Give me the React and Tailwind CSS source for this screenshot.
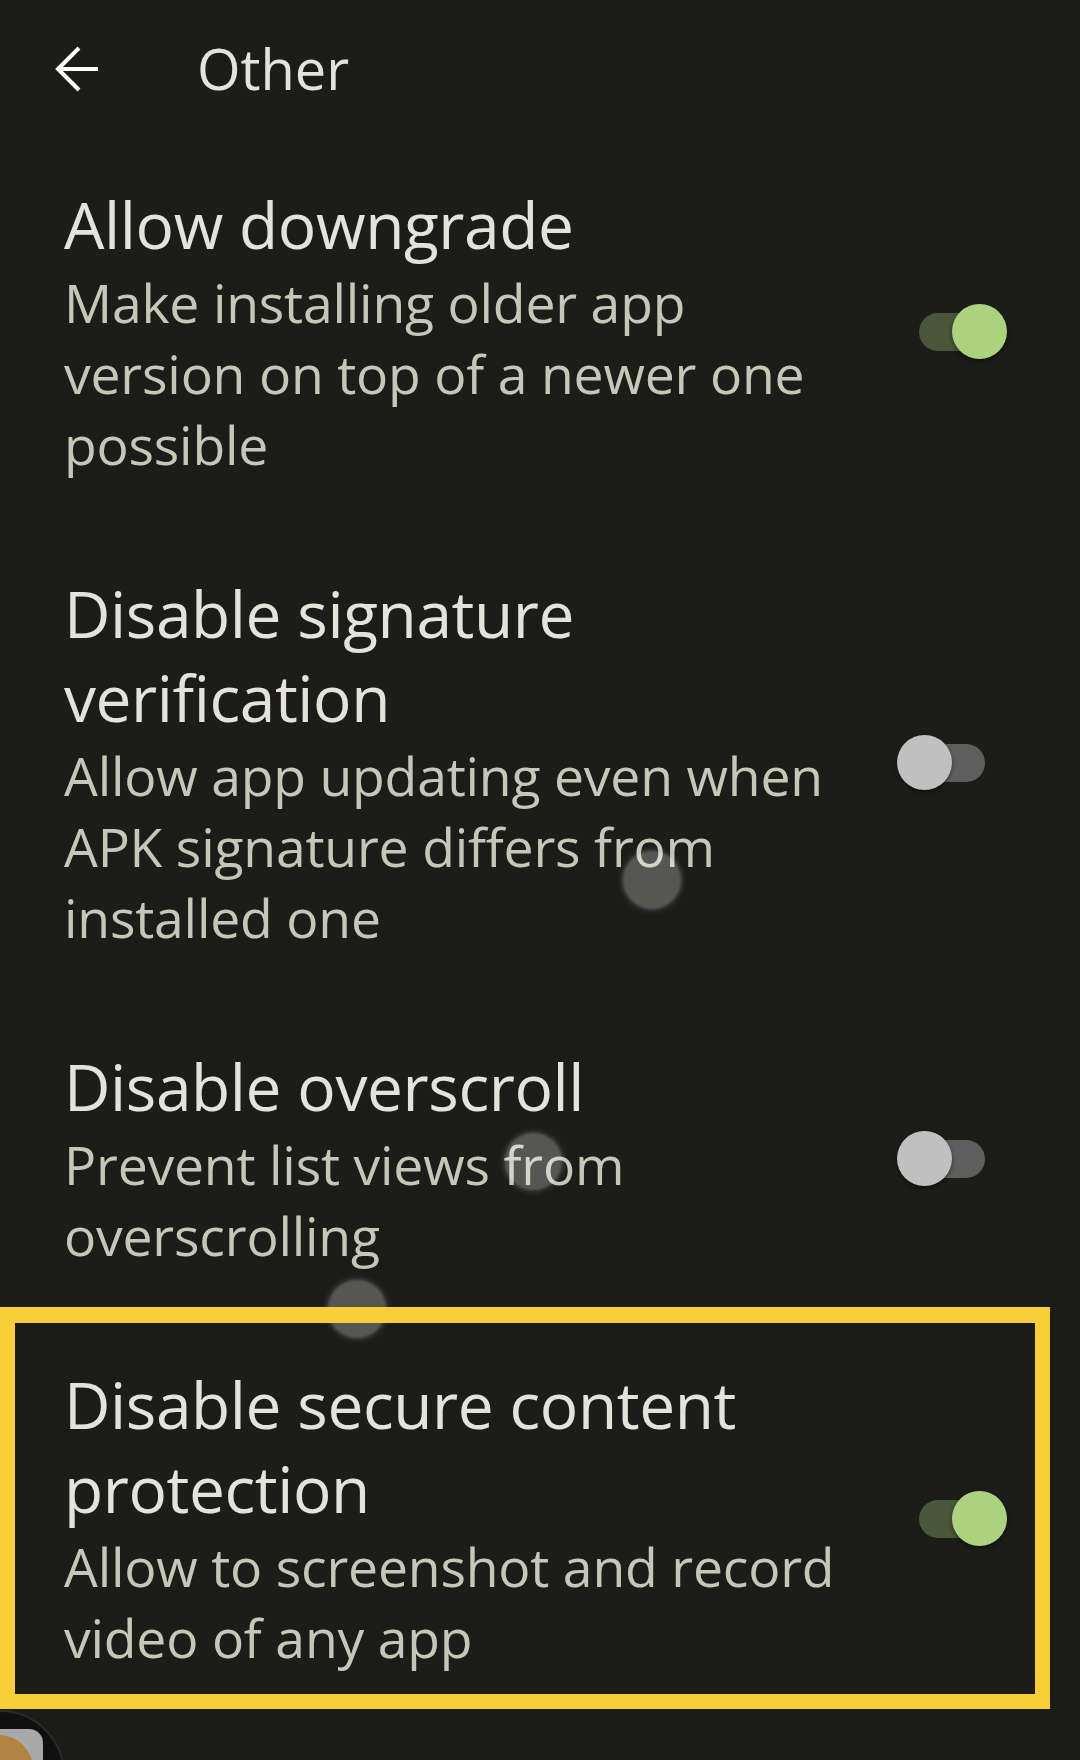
import React from "react";

const font = { fontFamily: '"Open Sans", "Noto Sans", sans-serif' };

function Toggle({ on }) {
  return (
    <div className="relative w-[110px] h-[55px] shrink-0">
      <div
        className={
          "absolute left-[22px] top-[9px] w-[66px] h-[38px] rounded-full " +
          (on ? "bg-[#4a573a]" : "bg-[#5e5e5e]")
        }
      />
      <div
        className={
          "absolute top-0 w-[55px] h-[55px] rounded-full shadow-[0_2px_4px_rgba(0,0,0,0.45)] " +
          (on ? "left-[55px] bg-[#acd280]" : "left-0 bg-[#c0c0c0]")
        }
      />
    </div>
  );
}

function Row({ title, sub, on }) {
  return (
    <div className="flex items-center py-[46px] pl-[64px] pr-[73px]">
      <div className="flex-1 flex flex-col">
        {title.map((t, i) => (
          <div key={i} className="text-[64px] tracking-[-0.4px] leading-[84px] text-[#e4e3db] whitespace-nowrap">
            {t}
          </div>
        ))}
        {sub.map((t, i) => (
          <div key={i} className="text-[53.5px] tracking-[-0.2px] leading-[71px] text-[#c5c7b8] whitespace-nowrap">
            {t}
          </div>
        ))}
      </div>
      <Toggle on={on} />
    </div>
  );
}

export default function App() {
  return (
    <div className="relative w-[1080px] h-[1760px] overflow-hidden bg-[#1c1c18]" style={font}>
      <div className="flex items-center h-[137px] pl-[55px]">
        <svg width="44" height="46" viewBox="0 0 44 46" className="shrink-0">
          <path d="M43 23 H3 M24 2 L3 23 L24 44" fill="none" stroke="#ffffff" strokeWidth="4" />
        </svg>
        <div className="ml-[98px] text-[56px] leading-[64px] text-[#e4e3db] mt-[-2px]">Other</div>
      </div>

      <Row
        title={["Allow downgrade"]}
        sub={["Make installing older app", "version on top of a newer one", "possible"]}
        on
      />
      <Row
        title={["Disable signature", "verification"]}
        sub={["Allow app updating even when", "APK signature differs from", "installed one"]}
      />
      <Row title={["Disable overscroll"]} sub={["Prevent list views from", "overscrolling"]} />
      <Row
        title={["Disable secure content", "protection"]}
        sub={["Allow to screenshot and record", "video of any app"]}
        on
      />

      {/* touch ghosts */}
      <div className="absolute left-[623px] top-[851px] w-[58px] h-[58px] rounded-full bg-[rgba(255,255,255,0.26)] shadow-[0_0_6px_rgba(190,200,255,0.35)] blur-[1px]" />
      <div className="absolute left-[505px] top-[1133px] w-[57px] h-[57px] rounded-full bg-[rgba(255,255,255,0.26)] shadow-[0_0_6px_rgba(190,200,255,0.35)] blur-[1px]" />
      <div className="absolute left-[328px] top-[1280px] w-[58px] h-[58px] rounded-full bg-[rgba(255,255,255,0.26)] shadow-[0_0_6px_rgba(190,200,255,0.35)] blur-[1px]" />

      {/* highlight box */}
      <div className="absolute left-0 top-[1307px] w-[1050px] h-[402px] border-[15px] border-t-[16px] border-[#f9cd37]" />

      {/* floating bubble */}
      <div className="absolute left-[-65px] top-[1710px] w-[130px] h-[130px] rounded-full bg-[#101010] border-2 border-[#2a2a2a]" />
      <div className="absolute left-[-40px] top-[1729px] w-[83px] h-[83px] rounded-[14px] bg-[#a9a9a9]" />
      <div className="absolute left-[-35px] top-[1735px] w-[68px] h-[68px] rounded-full bg-[#b08440]" />
    </div>
  );
}
